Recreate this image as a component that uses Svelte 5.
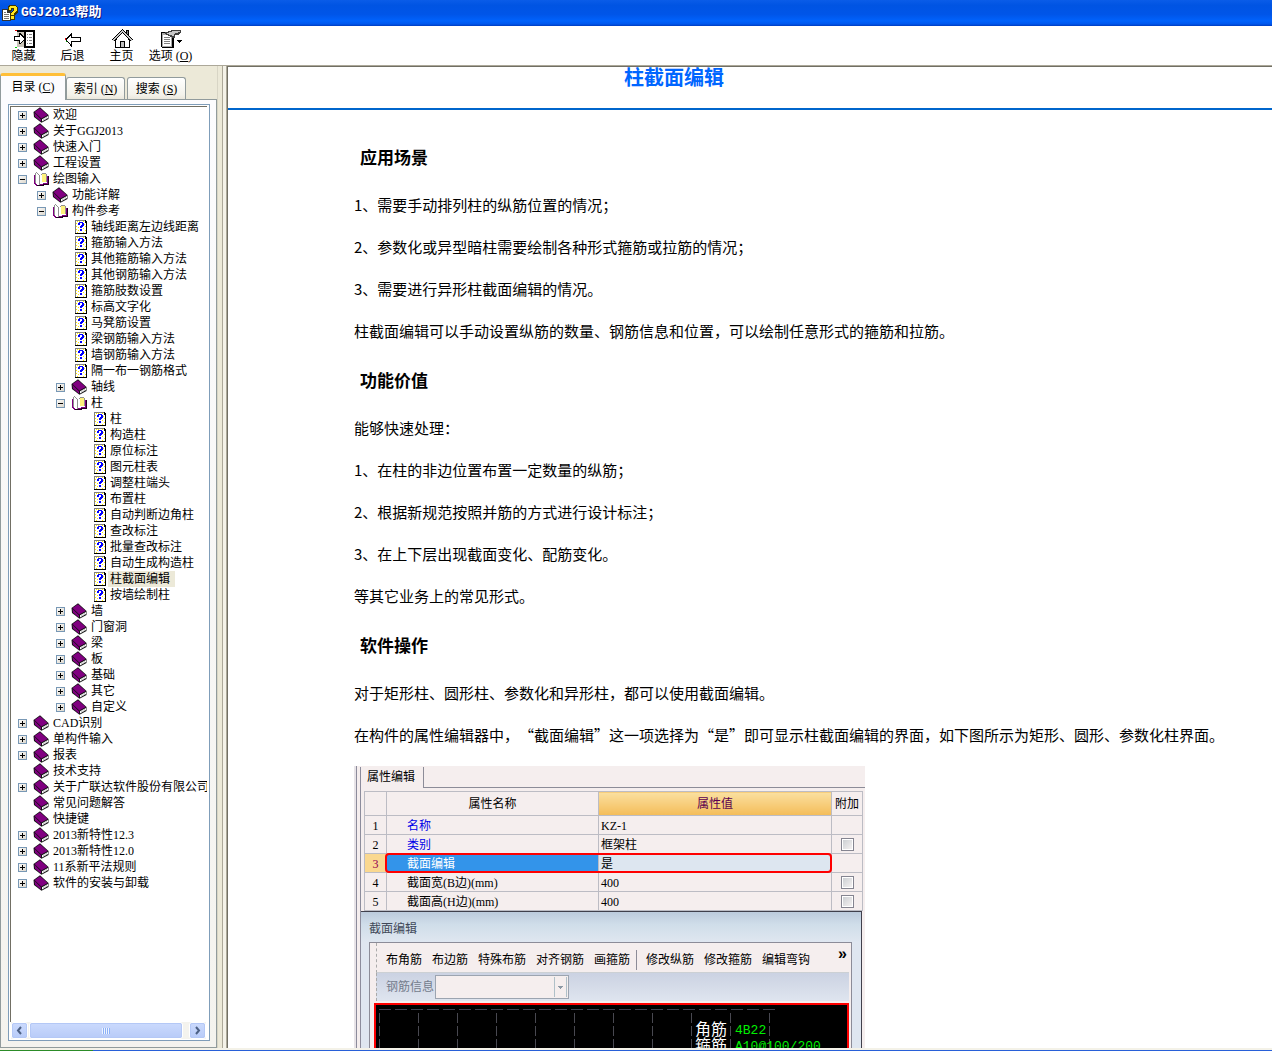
<script>
  const page = (name, current = false) => ({ name, page: true, current });
  const book = (name) => ({ name, closed: true });

  let tree = $state([
    book('欢迎'),
    book('关于GGJ2013'),
    book('快速入门'),
    book('工程设置'),
    {
      name: '绘图输入',
      children: [
        book('功能详解'),
        {
          name: '构件参考',
          children: [
            page('轴线距离左边线距离'),
            page('箍筋输入方法'),
            page('其他箍筋输入方法'),
            page('其他钢筋输入方法'),
            page('箍筋肢数设置'),
            page('标高文字化'),
            page('马凳筋设置'),
            page('梁钢筋输入方法'),
            page('墙钢筋输入方法'),
            page('隔一布一钢筋格式'),
            book('轴线'),
            {
              name: '柱',
              children: [
                page('柱'),
                page('构造柱'),
                page('原位标注'),
                page('图元柱表'),
                page('调整柱端头'),
                page('布置柱'),
                page('自动判断边角柱'),
                page('查改标注'),
                page('批量查改标注'),
                page('自动生成构造柱'),
                page('柱截面编辑', true),
                page('按墙绘制柱')
              ]
            },
            book('墙'),
            book('门窗洞'),
            book('梁'),
            book('板'),
            book('基础'),
            book('其它'),
            book('自定义')
          ]
        }
      ]
    },
    book('CAD识别'),
    book('单构件输入'),
    book('报表'),
    { name: '技术支持', closed: true, leaf: true },
    book('关于广联达软件股份有限公司'),
    { name: '常见问题解答', closed: true, leaf: true },
    { name: '快捷键', closed: true, leaf: true },
    book('2013新特性12.3'),
    book('2013新特性12.0'),
    book('11系新平法规则'),
    book('软件的安装与卸载')
  ]);

  const properties = [
    { name: '名称', value: 'KZ-1', link: true },
    { name: '类别', value: '框架柱', link: true, extra: true },
    { name: '截面编辑', value: '是', selected: true },
    { name: '截面宽(B边)(mm)', value: '400', extra: true },
    { name: '截面高(H边)(mm)', value: '400', extra: true }
  ];

  const leftTools = ['布角筋', '布边筋', '特殊布筋', '对齐钢筋', '画箍筋'];
  const rightTools = ['修改纵筋', '修改箍筋', '编辑弯钩'];

  function toggle(node) {
    node.closed = !node.closed;
  }
</script>

{#snippet branch(nodes)}
  <ul>
    {#each nodes as node}
      <li>
        <div class="row">
          {#if node.page || node.leaf}
            <span class="expander-gap"></span>
          {:else}
            <button class="expander" aria-label={node.closed ? '展开' : '折叠'} onclick={() => toggle(node)}>
              <svg viewBox="0 0 9 9" width="9" height="9" shape-rendering="crispEdges">
                <path d="M2 4h5v1H2z" />
                {#if node.closed}<path d="M4 2h1v5H4z" />{/if}
              </svg>
            </button>
          {/if}
          {#if node.page}
            <svg class="icon" viewBox="0 0 16 16" width="16" height="16" shape-rendering="crispEdges">
              <path d="M4 1h10l2 2v12H4z" fill="#000" />
              <path d="M4 1h10v1H5v12H4z" fill="#808080" />
              <path d="M5 2h9v2h1v10H5z" fill="#fff" />
              <path
                d="M6 2h1v1H6zM8 2h1v1H8zM12 2h1v1h-1zM5 4h1v1H5zM13 5h1v1h-1zM5 7h1v1H5zM14 7h1v1h-1zM7 8h1v1H7zM12 9h1v1h-1zM5 10h1v1H5zM14 11h1v1h-1zM7 11h1v1H7zM6 13h1v1H6zM12 13h1v1h-1z"
                fill="#ffe800"
              />
              <path d="M8 3h4v1h1v3h-1v1h-1v1h-2V7h1V6h1V4H9v2H7V4h1zM9 10h2v2H9z" fill="#0000ff" />
            </svg>
          {:else if node.closed}
            <svg class="icon" viewBox="0 0 16 16" width="16" height="16">
              <path d="M.5 5L7 .3 15.500 8v4L8.500 15.800 1 10z" fill="#111" />
              <path d="M1.500 5L7 1.200 14.700 8 8.300 11.600z" fill="#800080" />
              <path d="M1.400 5.800L8 12.200v2.500L2 9.600z" fill="#800080" />
              <path d="M9 12.300L15 9v2L9 14.400z" fill="#fff" />
              <path d="M10.500 12.700l1-.6M12.800 11.400l1-.6" stroke="#808080" />
            </svg>
          {:else}
            <svg class="icon" viewBox="0 0 16 16" width="16" height="16" shape-rendering="crispEdges">
              <path d="M1 4h1v8l2 2h5v1H3l-2-2z" fill="#800080" />
              <path d="M3 2h1l3 3v8l-4-2z" fill="#fff" />
              <path d="M2 2h1v10H2zM3 1h1v1H3zM4 2h1v1H4zM5 3h1v1H5zM6 4h1v10H6z" fill="#909090" />
              <path d="M7 4h1V3h2V2h3v10h-3v1H7z" fill="#fff" />
              <path d="M9 3h4v8H9z" fill="#fff27a" />
              <path d="M8 3h1v1H8zM9 2h4v1H9zM13 3h1v8h-1zM10 12h3v1h-3z" fill="#909090" />
              <path d="M14 5h1v8h-4l-1 1H7v-1h2l1-1h4z" fill="#800080" />
              <path d="M15 5h1v9h-5v1H4v-1h6v-1h5z" fill="#200020" />
            </svg>
          {/if}
          <a href="#topic" class:current={node.current}>{node.name}</a>
        </div>
        {#if node.children && !node.closed}{@render branch(node.children)}{/if}
      </li>
    {/each}
  </ul>
{/snippet}

<div class="window">
  <header class="titlebar">
    <svg viewBox="0 0 16 16" width="16" height="16" shape-rendering="crispEdges">
      <path d="M0 4h6l3 3v9H0z" fill="#333" />
      <path d="M1 5h4v3h3v7H1z" fill="#fff" />
      <path d="M2 7h2v1H2zM2 9h5v1H2zM2 11h5v1H2zM2 13h5v1H2z" fill="#777" />
      <path d="M7 0h6l3 2v5l-3 3v5H8V8l3-2V4h-1v2H6V2z" fill="#403800" />
      <path d="M8 1h5l2 2v3l-3 2v2H9V8l3-2V3H9v2H7V2zM9 11h3v3H9z" fill="#ffe720" />
    </svg>
    <span>GGJ2013帮助</span>
  </header>

  <nav class="toolbar">
    <button>
      <svg viewBox="0 0 22 20" width="22" height="20" shape-rendering="crispEdges">
        <path d="M4 1h18v18H11V3H4z" fill="#000" />
        <path d="M4 3h7v15H4z" fill="#c8c4b8" />
        <path d="M13 3h7v14h-7z" fill="#fff" />
        <path d="M14 5h1v1h-1zM16 5h3v1h-3zM14 8h1v1h-1zM16 8h3v1h-3zM14 11h1v1h-1zM16 11h3v1h-3zM14 14h1v1h-1zM16 14h3v1h-3z" fill="#808080" />
        <path d="M1 7h5V4h1l5 5v1l-5 5H6v-3H1z" fill="#000" />
        <path d="M2 8h5V6l4 4-4 4v-3H2z" fill="#fff" />
        <path d="M2 1h2v1H2z" fill="#d00" />
        <path d="M2 18h2v1H2z" fill="#0c0" />
      </svg>
      <span>隐藏</span>
    </button>
    <button>
      <svg viewBox="0 0 22 20" width="22" height="20" shape-rendering="crispEdges">
        <path d="M4 10.500l5-5v3h9v4H9v4z" fill="#fff" stroke="#000" />
        <path d="M3 9h1v2H3z" fill="#d00" />
        <path d="M4 12h1v1H4z" fill="#0a0" />
      </svg>
      <span>后退</span>
    </button>
    <button>
      <svg viewBox="0 0 22 20" width="22" height="20" shape-rendering="crispEdges">
        <path d="M15.500 1.500h2v6h-2z" fill="#808080" stroke="#000" />
        <path d="M4.500 11v7.500h14V11l-7-8z" fill="#fff" stroke="#000" />
        <path d="M2 11.500L11.500 2 21 11.500" fill="none" stroke="#000" stroke-width="3" />
        <path d="M2 11.500L11.500 2 21 11.500" fill="none" stroke="#c8c8c8" />
        <path d="M9.500 18.500v-6h4v6z" fill="#c0c0c0" stroke="#000" />
      </svg>
      <span>主页</span>
    </button>
    <button>
      <svg viewBox="0 0 22 20" width="22" height="20" shape-rendering="crispEdges">
        <path d="M1 3h13v16H2l-1-1z" fill="#000" />
        <path d="M2 4h10v14H2z" fill="#a8a8a8" />
        <path d="M3 6h8v11H3z" fill="#fff" />
        <path d="M4 8h6v1H4zM4 10h6v1H4zM4 12h6v1H4zM4 14h6v1H4z" fill="#808080" />
        <path d="M5 3h3V2h3V1h10v3h-1v1h-1v1h-4v3h-3V8h-2V7H8V6H6V5H5z" fill="#404040" />
        <path d="M7 4h2V3h3V2h8v1h-2v1h-3v1h-1v2h-2V6H9V5H7z" fill="#c8c8c8" />
        <path d="M17 11h5v1h-1v1h-1v1h-1v-1h-1v-1h-1z" fill="#000" />
      </svg>
      <span>选项 (<u>O</u>)</span>
    </button>
  </nav>

  <div class="body">
    <aside>
      <div class="tabs" role="tablist">
        <button role="tab" aria-selected="true" class="active">目录 (<u>C</u>)</button>
        <button role="tab" aria-selected="false">索引 (<u>N</u>)</button>
        <button role="tab" aria-selected="false">搜索 (<u>S</u>)</button>
      </div>
      <div class="panel">
        <div class="tree-box">
          <div class="tree">{@render branch(tree)}</div>
          <div class="scrollbar">
            <button aria-label="向左滚动">
              <svg viewBox="0 0 9 9" width="9" height="9"><path d="M6 1L3 4.500 6 8" /></svg>
            </button>
            <div class="track"><div class="thumb"><i></i></div></div>
            <button aria-label="向右滚动">
              <svg viewBox="0 0 9 9" width="9" height="9"><path d="M3 1l3 3.500L3 8" /></svg>
            </button>
          </div>
        </div>
      </div>
    </aside>
    <div class="splitter"></div>

    <main>
      <h1>柱截面编辑</h1>
      <article>
        <h2>应用场景</h2>
        <p>1、需要手动排列柱的纵筋位置的情况；</p>
        <p>2、参数化或异型暗柱需要绘制各种形式箍筋或拉筋的情况；</p>
        <p>3、需要进行异形柱截面编辑的情况。</p>
        <p>柱截面编辑可以手动设置纵筋的数量、钢筋信息和位置，可以绘制任意形式的箍筋和拉筋。</p>
        <h2>功能价值</h2>
        <p>能够快速处理：</p>
        <p>1、在柱的非边位置布置一定数量的纵筋；</p>
        <p>2、根据新规范按照并筋的方式进行设计标注；</p>
        <p>3、在上下层出现截面变化、配筋变化。</p>
        <p>等其它业务上的常见形式。</p>
        <h2>软件操作</h2>
        <p>对于矩形柱、圆形柱、参数化和异形柱，都可以使用截面编辑。</p>
        <p>在构件的属性编辑器中，“截面编辑”这一项选择为“是”即可显示柱截面编辑的界面，如下图所示为矩形、圆形、参数化柱界面。</p>

        <figure>
          <div class="sheet">
            <div class="sheet-tabs"><span>属性编辑</span></div>
            <table>
              <thead>
                <tr><th class="num"></th><th>属性名称</th><th class="value">属性值</th><th class="extra">附加</th></tr>
              </thead>
              <tbody>
                {#each properties as row, i}
                  <tr class:selected={row.selected}>
                    <td class="num">{i + 1}</td>
                    <td class="name" class:link={row.link}>{row.name}</td>
                    <td class="value">{row.value}</td>
                    <td class="extra">
                      {#if row.extra}<input type="checkbox" aria-label={row.name} />{/if}
                    </td>
                  </tr>
                {/each}
              </tbody>
            </table>
            <div class="dialog">
              <div class="dialog-title">截面编辑</div>
              <div class="dialog-body">
                <div class="tools">
                  {#each leftTools as tool}<button>{tool}</button>{/each}
                  <span class="sep"></span>
                  {#each rightTools as tool}<button>{tool}</button>{/each}
                  <span class="more">»</span>
                </div>
                <div class="info">
                  <label for="rebar">钢筋信息</label>
                  <select id="rebar" disabled></select>
                </div>
                <div class="canvas">
                  <div><span>角筋</span><b>4B22</b></div>
                  <div><span>箍筋</span><b>A10@100/200</b></div>
                </div>
              </div>
            </div>
          </div>
        </figure>
      </article>
    </main>
  </div>
  <footer></footer>
</div>

<style>
  :global(body) {
    margin: 0;
  }

  .window {
    display: flex;
    flex-direction: column;
    height: 100vh;
    overflow: hidden;
    background: #fff;
    color: #000;
    font: 12px/16px "Liberation Serif", "Noto Sans CJK SC", sans-serif;
    text-spacing-trim: space-all;
  }
  .window * {
    box-sizing: border-box;
  }
  button {
    margin: 0;
    padding: 0;
    border: 0;
    background: none;
    color: inherit;
    font: inherit;
    white-space: nowrap;
  }

  .titlebar {
    display: flex;
    flex: none;
    align-items: center;
    gap: 3px;
    height: 26px;
    padding-left: 2px;
    background: linear-gradient(#0a5ce8, #0054e3 20%, #0055e8 55%, #0062fc 80%, #0058ee 92%, #003cc0);
    color: #fff;
    font: bold 13px/20px "Liberation Mono", "Noto Sans CJK SC", monospace;
    text-shadow: 1px 1px #0a1883;
  }

  .toolbar {
    display: flex;
    flex: none;
    gap: 8px;
    height: 39px;
    padding: 3px 3px 0;
  }
  .toolbar button {
    display: flex;
    flex-direction: column;
    align-items: center;
    width: 41px;
    line-height: 14px;
  }

  .body {
    display: flex;
    flex: 1;
    min-height: 0;
    border-top: 1px solid #aca899;
  }

  aside {
    display: flex;
    flex: none;
    flex-direction: column;
    width: 217px;
    padding-top: 7px;
    background: #ece9d8;
  }
  .tabs {
    display: flex;
    align-items: flex-end;
    gap: 2px;
    height: 26px;
  }
  .tabs button {
    width: 59px;
    height: 22px;
    border: 1px solid #919b9c;
    border-bottom: 0;
    border-radius: 3px 3px 0 0;
    background: linear-gradient(#fff, #f3f2ea 80%, #eae7dc);
    line-height: 20px;
  }
  .tabs .active {
    z-index: 1;
    width: 66px;
    height: 27px;
    margin: 0 -2px -1px 0;
    padding-bottom: 3px;
    border-top: 3px solid #ffbf38;
    background: #fcfcfe;
  }
  .panel {
    display: flex;
    flex: 1;
    min-height: 0;
    padding: 4px 6px 6px 7px;
    border: 1px solid #919b9c;
    background: linear-gradient(#fcfcfe, #f4f3ee);
  }
  .tree-box {
    display: flex;
    flex: 1;
    flex-direction: column;
    min-width: 0;
    padding: 1px;
    border: 1px solid #7f9db9;
    background: #fff;
  }
  .tree {
    flex: 1;
    overflow: hidden;
    min-height: 0;
    margin-right: 1px;
    border: 1px solid #716f64;
    border-width: 1px 0 0 1px;
  }
  ul {
    margin: 0;
    padding: 0;
    list-style: none;
  }
  .tree > :global(ul) {
    padding-left: 7px;
  }
  li ul {
    padding-left: 19px;
  }
  .row {
    display: flex;
    align-items: center;
    height: 16px;
    white-space: nowrap;
  }
  .expander,
  .expander-gap {
    flex: none;
    width: 9px;
    height: 9px;
    margin-right: 6px;
  }
  .expander {
    display: flex;
    outline: 1px solid #7898b5;
    outline-offset: -1px;
    background: linear-gradient(135deg, #fff, #d8d2c6);
  }
  .icon {
    flex: none;
    margin-right: 2px;
  }
  .row a {
    padding: 0 2px;
    color: #000;
    line-height: 16px;
    text-decoration: none;
  }
  .row .current {
    padding-right: 5px;
    background: #ece9d8;
  }

  .scrollbar {
    display: flex;
    flex: none;
    gap: 1px;
    height: 17px;
    margin: 0 2px 0 1px;
    background: #f4f3ee;
  }
  .scrollbar button,
  .thumb {
    display: flex;
    align-items: center;
    justify-content: center;
    border: 1px solid #fff;
    border-radius: 3px;
    outline: 1px solid #b4c8f6;
    outline-offset: -2px;
    background: linear-gradient(#cbdafd, #b8cbf8);
  }
  .scrollbar button {
    width: 17px;
  }
  .scrollbar path {
    fill: none;
    stroke: #4d6185;
    stroke-width: 2;
  }
  .track {
    flex: 1;
  }
  .thumb {
    width: 97%;
    height: 17px;
  }
  .thumb i {
    width: 8px;
    height: 6px;
    background: repeating-linear-gradient(90deg, #eef4fe 0 1px, #8cb0f8 1px 2px);
  }

  .splitter {
    flex: none;
    width: 11px;
    border-right: 1px solid #716f64;
    background: linear-gradient(90deg, #d8d5c5 1px, #ece9d8 1px 5px, #aca899 5px 6px, #f4f2e8 6px 9px, #aca899 9px);
  }
  main {
    flex: 1;
    min-width: 0;
    overflow: hidden;
    border-top: 1px solid #716f64;
  }
  h1,
  h2,
  p {
    font-family: "Noto Sans CJK SC", sans-serif;
  }
  h1 {
    height: 43px;
    margin: 0;
    padding-right: 152px;
    border-bottom: 2px solid #0066cc;
    color: #0066ff;
    font-size: 20px;
    line-height: 20px;
    text-align: center;
  }
  article {
    padding: 36px 0 0 126px;
    font-size: 15px;
    line-height: 22px;
    white-space: nowrap;
  }
  h2 {
    margin: 27px 0 26px 6px;
    font-size: 17px;
    line-height: 22px;
  }
  h2:first-child {
    margin-top: 0;
  }
  p {
    margin: 0 0 20px;
  }

  figure {
    width: 511px;
    margin: 0;
    padding: 1px 3px 0 6px;
    background: linear-gradient(90deg, #e8e4e8 2px, #8c8c9c 2px 3px, #f5eeee 3px);
    font-size: 12px;
    line-height: 16px;
  }
  .sheet {
    border-left: 1px solid #8c8c9c;
  }
  .sheet-tabs {
    display: flex;
    height: 21px;
    margin-right: -3px;
    border-bottom: 1px solid #8c8c98;
  }
  .sheet-tabs span {
    height: 21px;
    padding: 2px 8px 0 6px;
    border-right: 1px solid #8c8c98;
    background: #f5eeee;
  }
  table {
    width: 499px;
    margin: 3px 0 0 3px;
    border-collapse: collapse;
    table-layout: fixed;
  }
  th,
  td {
    height: 19px;
    padding: 1px 2px 0;
    border: 1px solid #bcbcc4;
    line-height: 16px;
  }
  th {
    height: 24px;
    font-weight: normal;
  }
  .num {
    width: 22px;
    text-align: center;
  }
  .value {
    width: 233px;
  }
  .extra {
    width: 31px;
    padding: 0;
    text-align: center;
  }
  th.value {
    background: linear-gradient(#fae0a0, #f4bc58);
    color: #5c0050;
  }
  .name {
    padding-left: 20px;
  }
  .link {
    color: #0000e8;
  }
  .selected .num {
    background: #fad890;
    color: #900050;
  }
  .selected .name {
    position: relative;
    background: #3394ea;
    color: #fff;
  }
  .selected .name::after {
    content: "";
    position: absolute;
    inset: -1px -234px -1px -2px;
    border: 2px solid #f00;
    border-radius: 4px;
  }
  .selected .value {
    background: #dde6f0;
  }
  input {
    display: block;
    width: 13px;
    height: 13px;
    margin: 0 auto;
    border: 1px solid #848490;
    outline: 1px solid #fff;
    outline-offset: -2px;
    background: linear-gradient(135deg, #c8ccd0, #f8f4f4);
    appearance: none;
  }

  .dialog {
    height: 260px;
    padding: 0 9px 0 8px;
    border: 1px solid #40404c;
    border-left: 0;
    background: linear-gradient(#bccbdc, #cfdde9 12px, #dfe6f0 30px);
  }
  .dialog-title {
    height: 30px;
    padding-top: 9px;
    color: #404858;
  }
  .dialog-body {
    border: 1px solid #8c8c98;
    background: #f5eeee;
  }
  .tools,
  .info {
    display: flex;
    align-items: center;
    margin: 0 2px 0 6px;
    padding-left: 9px;
    border-left: 1px dashed #aaa;
  }
  .tools {
    gap: 10px;
    height: 30px;
    padding-top: 4px;
    border-bottom: 1px solid #ccd0d4;
  }
  .sep {
    width: 1px;
    height: 20px;
    margin: 0 -1px 0 -4px;
    background: #8c8c98;
  }
  .more {
    margin: -12px 2px 0 auto;
    font: bold 16px/16px "Liberation Sans", sans-serif;
  }
  .info {
    gap: 1px;
    height: 28px;
    background: linear-gradient(#cbd2e2, #dfe5ef);
    color: #747c8c;
  }
  select {
    width: 134px;
    height: 24px;
    border: 1px solid #9ca4b0;
    border-radius: 0;
    background:
      linear-gradient(#8c98a4, #8c98a4) right 5px top 10px / 5px 1px no-repeat,
      linear-gradient(#8c98a4, #8c98a4) right 6px top 11px / 3px 1px no-repeat,
      linear-gradient(#8c98a4, #8c98a4) right 7px top 12px / 1px 1px no-repeat,
      linear-gradient(90deg, #b0c0c8 1px, #f5eeee 1px 12px, #b0c0c8 12px) right 1px center / 13px 20px no-repeat,
      #f5eeee;
    opacity: 1;
    appearance: none;
  }
  .canvas {
    height: 200px;
    margin: 2px 2px 0 4px;
    padding: 17px 0 0 319px;
    border: 2px solid #f00;
    background:
      repeating-linear-gradient(90deg, #404050 0 12px, #000 12px 16px) 3px 4px / 400px 1px no-repeat,
      repeating-linear-gradient(#000 0 3px, transparent 3px 13px) 0 5px,
      repeating-linear-gradient(90deg, transparent 0 3px, #484850 3px 4px, transparent 4px 39px) 0 5px / 404px 200px no-repeat,
      #000;
    color: #fff;
    font-size: 16px;
    line-height: 16px;
  }
  .canvas div {
    display: flex;
    gap: 8px;
    height: 16px;
  }
  .canvas b {
    color: #00f000;
    font: 13px/18px "Liberation Mono", monospace;
  }

  footer {
    flex: none;
    height: 3px;
    background:
      linear-gradient(90deg, #2c8c28 93px, #2860d8 93px) bottom / 100% 1px no-repeat,
      #f4f2e8;
  }
</style>
